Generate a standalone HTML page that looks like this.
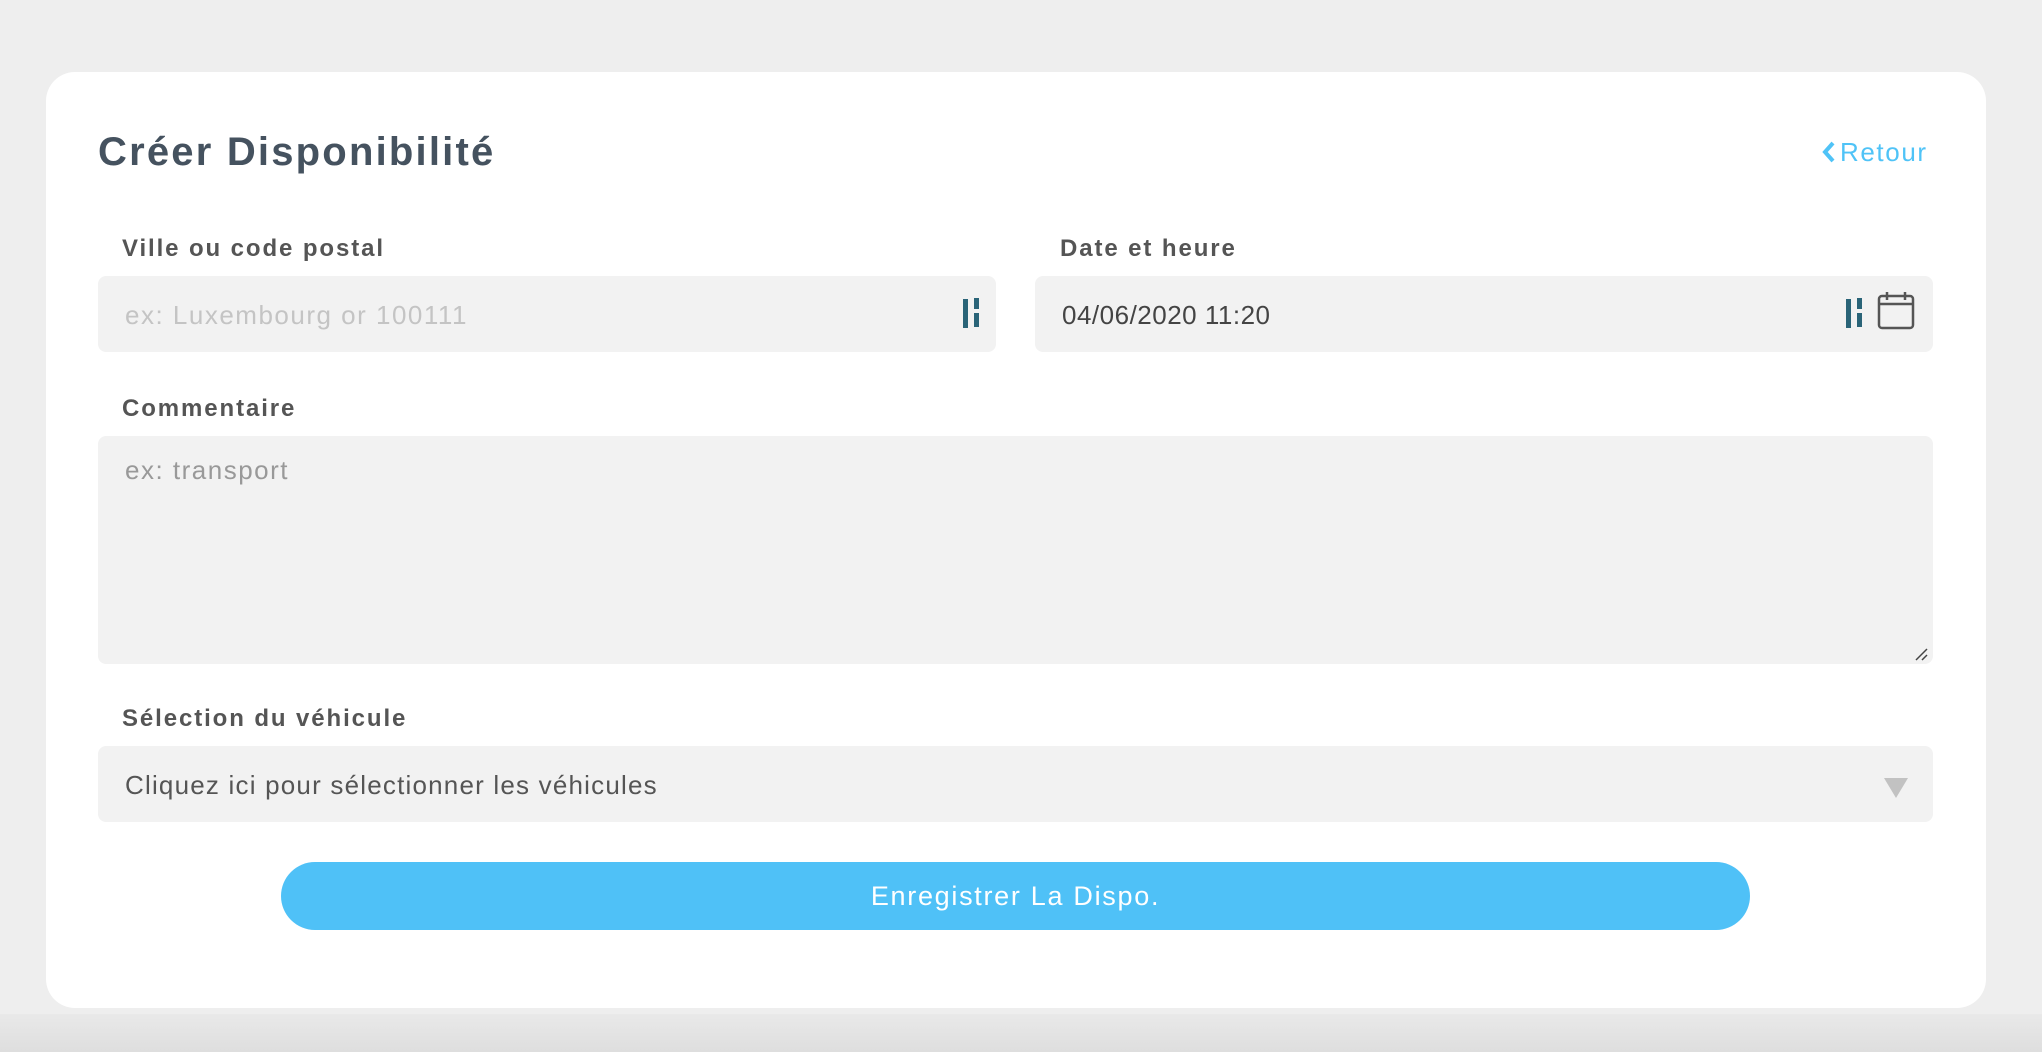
<!DOCTYPE html>
<html><head><meta charset="utf-8"><style>
body{margin:0;width:2042px;height:1052px;background:#eeeeee;font-family:"Liberation Sans",sans-serif;position:relative;overflow:hidden}
.bot{position:absolute;left:0;top:1014px;width:2042px;height:38px;background:linear-gradient(#e9e9e9,#dedede)}
.card{position:absolute;left:46px;top:72px;width:1940px;height:936px;background:#fff;border-radius:29px}
.a{position:absolute}
h1{position:absolute;left:98px;top:130px;margin:0;font-size:40px;font-weight:bold;color:#45525f;letter-spacing:2.2px}
.lab{position:absolute;font-size:24px;font-weight:bold;color:#555;letter-spacing:1.9px}
.inp{position:absolute;background:#f2f2f2;border-radius:8px}
.t{position:absolute;font-size:26px;letter-spacing:1.5px}
</style></head><body>
<div class="bot"></div>
<div class="card"></div>
<h1>Créer Disponibilité</h1>
<div class="a" style="left:1822px;top:137px;font-size:26px;color:#4fc3f7;letter-spacing:1.6px"><svg width="14" height="22" viewBox="0 0 14 22" style="vertical-align:-2px;margin-right:4px"><path d="M11 2 L3 11 L11 20" stroke="#4fc3f7" stroke-width="4" fill="none"/></svg>Retour</div>
<div class="lab" style="left:122px;top:235px">Ville ou code postal</div>
<div class="lab" style="left:1060px;top:235px">Date et heure</div>
<div class="inp" style="left:98px;top:276px;width:898px;height:76px"></div>
<div class="t" style="left:125px;top:300px;color:#c4c4c4">ex: Luxembourg or 100111</div>
<svg class="a" style="left:963px;top:298px" width="22" height="32"><rect x="0" y="1" width="5" height="29" fill="#2a6478"/><rect x="11" y="0" width="5" height="11" fill="#2a6478"/><rect x="11" y="15" width="5" height="14" fill="#2a6478"/></svg>
<div class="inp" style="left:1035px;top:276px;width:898px;height:76px"></div>
<div class="t" style="left:1062px;top:300px;color:#444;letter-spacing:0.5px">04/06/2020 11:20</div>
<svg class="a" style="left:1846px;top:298px" width="22" height="32"><rect x="0" y="1" width="5" height="29" fill="#2a6478"/><rect x="11" y="0" width="5" height="11" fill="#2a6478"/><rect x="11" y="15" width="5" height="14" fill="#2a6478"/></svg>
<svg class="a" style="left:1877px;top:291px" width="40" height="40"><rect x="2" y="5" width="34" height="32" rx="3" fill="none" stroke="#555" stroke-width="2.5"/><line x1="2" y1="13" x2="36" y2="13" stroke="#555" stroke-width="2.5"/><line x1="10" y1="1" x2="10" y2="9" stroke="#555" stroke-width="2.5"/><line x1="28" y1="1" x2="28" y2="9" stroke="#555" stroke-width="2.5"/></svg>
<div class="lab" style="left:122px;top:395px">Commentaire</div>
<div class="inp" style="left:98px;top:436px;width:1835px;height:228px"></div>
<div class="t" style="left:125px;top:455px;color:#999">ex: transport</div>
<svg class="a" style="left:1914px;top:647px" width="14" height="14"><path d="M2 13 L13 2 M8 13 L13 8" stroke="#444" stroke-width="1.5"/></svg>
<div class="lab" style="left:122px;top:705px">Sélection du véhicule</div>
<div class="inp" style="left:98px;top:746px;width:1835px;height:76px"></div>
<div class="t" style="left:125px;top:770px;color:#555;letter-spacing:1.2px">Cliquez ici pour sélectionner les véhicules</div>
<svg class="a" style="left:1884px;top:778px" width="24" height="20"><path d="M0 0 H24 L12 20Z" fill="#c2c2c2"/></svg>
<div class="a" style="left:281px;top:862px;width:1469px;height:68px;border-radius:34px;background:#4fc1f7;color:#fff;font-size:27px;text-align:center;line-height:68px;letter-spacing:1.7px">Enregistrer La Dispo.</div>
</body></html>
